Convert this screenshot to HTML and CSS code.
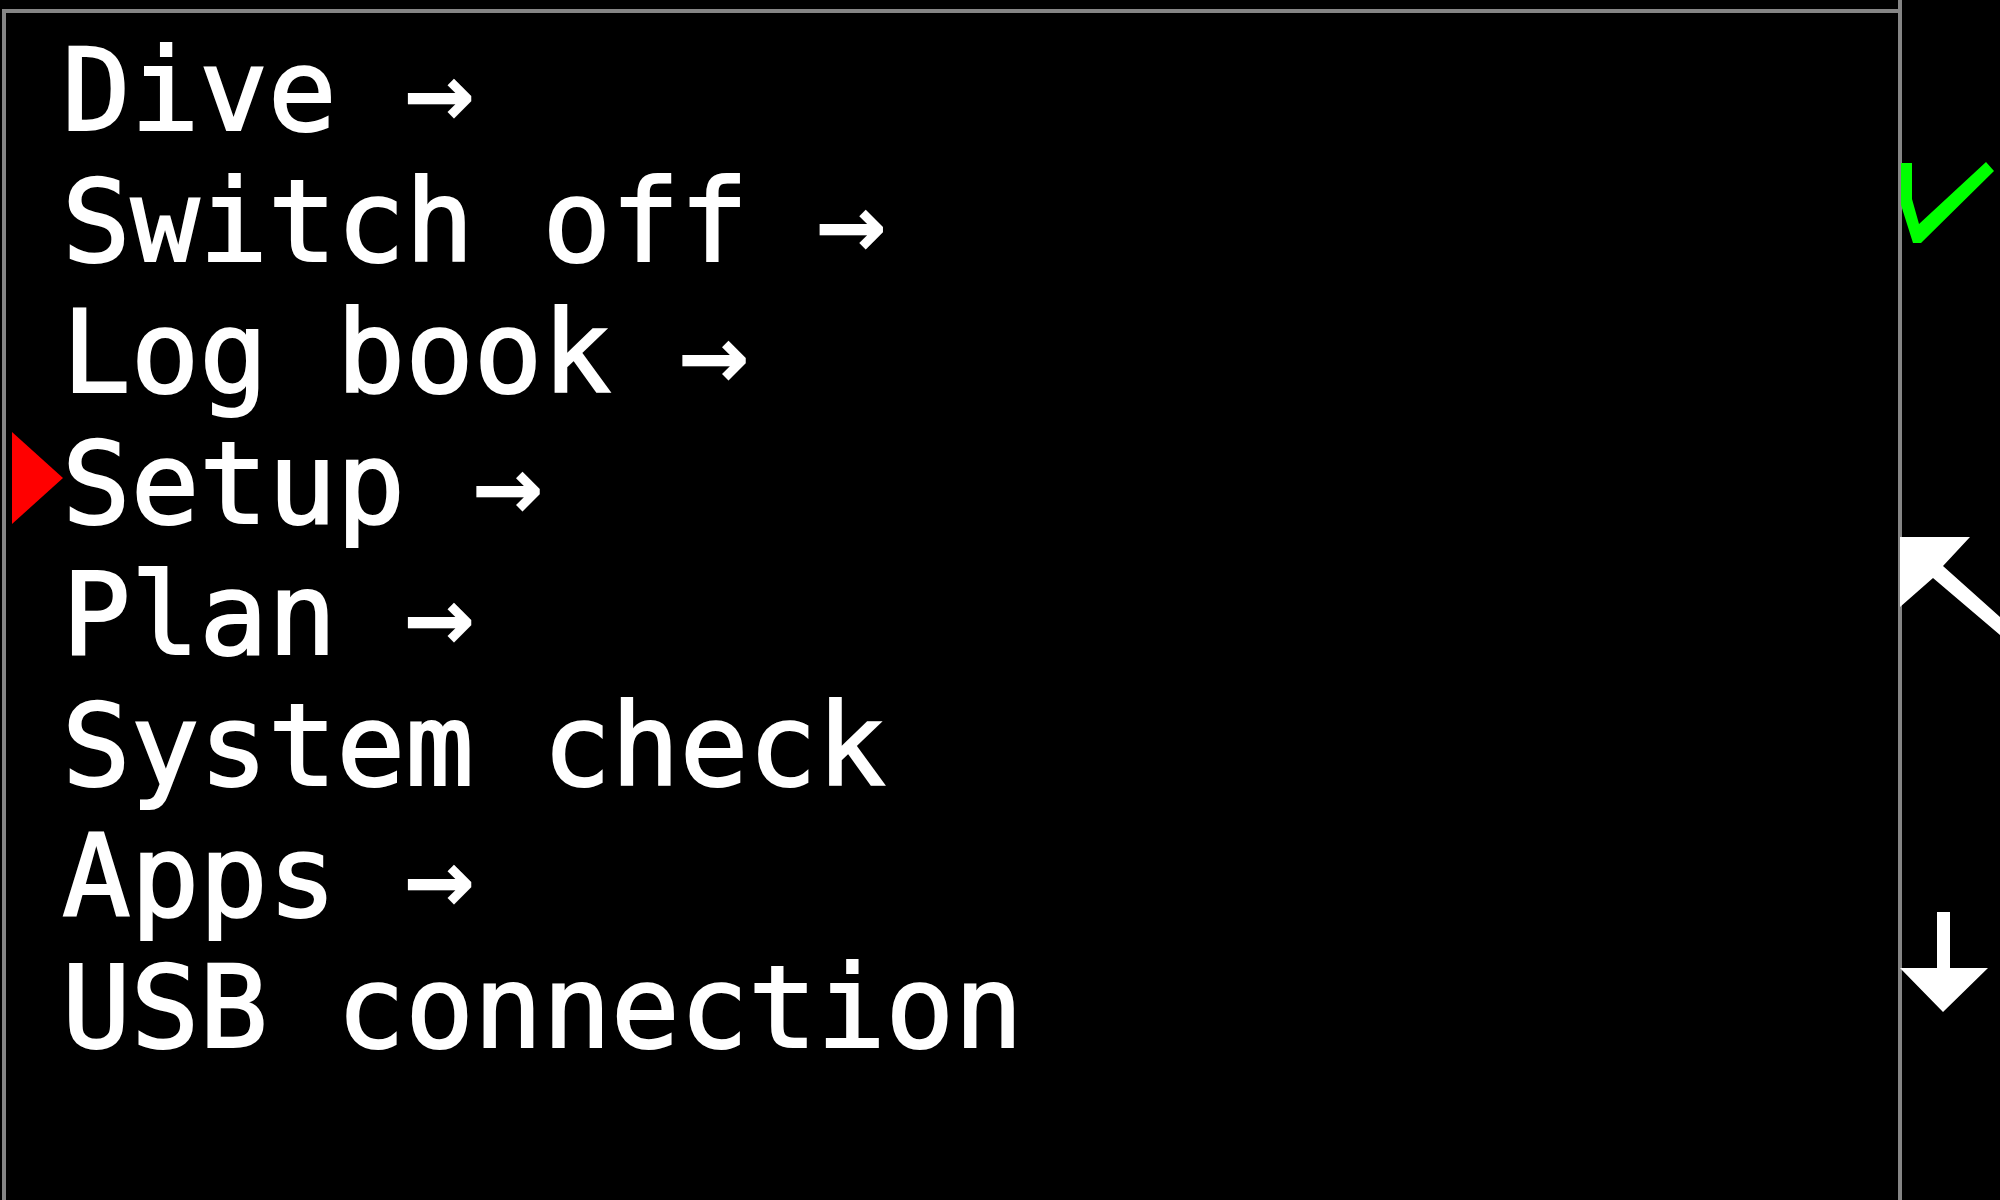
FILE: index.html
```html
<!DOCTYPE html>
<html lang="en">
<head>
<meta charset="utf-8">
<title>Main menu</title>
<link rel="stylesheet" href="styles.css">
</head>
<body>
<div class="screen">
  <main class="menu">
    <ul class="items">
      <li class="item">Dive →</li>
      <li class="item">Switch off →</li>
      <li class="item">Log book →</li>
      <li class="item selected">Setup →</li>
      <li class="item">Plan →</li>
      <li class="item">System check</li>
      <li class="item">Apps →</li>
      <li class="item">USB connection</li>
    </ul>
  </main>
  <aside class="keys">
    <svg class="key key-ok" width="102" height="82" viewBox="0 0 102 82">
      <polygon points="3,0 14,0 14,36 21,61 88,-1 96,8 23,80 15,80 3,42" fill="#00ff00"/>
    </svg>
    <svg class="key key-back" width="102" height="100" viewBox="0 0 102 100">
      <polygon points="2,0 72,0 45,29 102,80 102,98 35,41 2,70" fill="#ffffff"/>
    </svg>
    <svg class="key key-down" width="102" height="102" viewBox="0 0 102 102">
      <polygon points="39,0 52,0 52,56 90,56 45,100 2,56 39,56" fill="#ffffff"/>
    </svg>
  </aside>
</div>
</body>
</html>
```
FILE: styles.css
```css
html, body {
  margin: 0;
  padding: 0;
  background: #000000;
}

.screen {
  display: flex;
  width: 2000px;
  height: 1200px;
  overflow: hidden;
  background: #000000;
}

.menu {
  flex: 1;
  margin-top: 9px;
  margin-left: 2px;
  border-top: 4px solid #858585;
  border-left: 4px solid #858585;
}

.items {
  list-style: none;
  margin: 0;
  padding: 12px 0 0 56px;
  font-family: "DejaVu Sans Mono", "Liberation Mono", monospace;
  font-size: 114px;
  line-height: 131px;
  color: #ffffff;
  -webkit-text-stroke: 2px #ffffff;
}

.item {
  position: relative;
  white-space: pre;
}

.item.selected::before {
  content: "";
  position: absolute;
  left: -50px;
  top: 14px;
  width: 0;
  height: 0;
  border-top: 46px solid transparent;
  border-bottom: 46px solid transparent;
  border-left: 51px solid #ff0000;
}

.keys {
  width: 98px;
  flex: none;
  border-left: 4px solid #858585;
  display: flex;
  flex-direction: column;
  padding-top: 163px;
  overflow: visible;
}

.key {
  display: block;
  margin-left: -4px;
  overflow: visible;
}

.key-back {
  margin-top: 292px;
}

.key-down {
  margin-top: 275px;
}
```
